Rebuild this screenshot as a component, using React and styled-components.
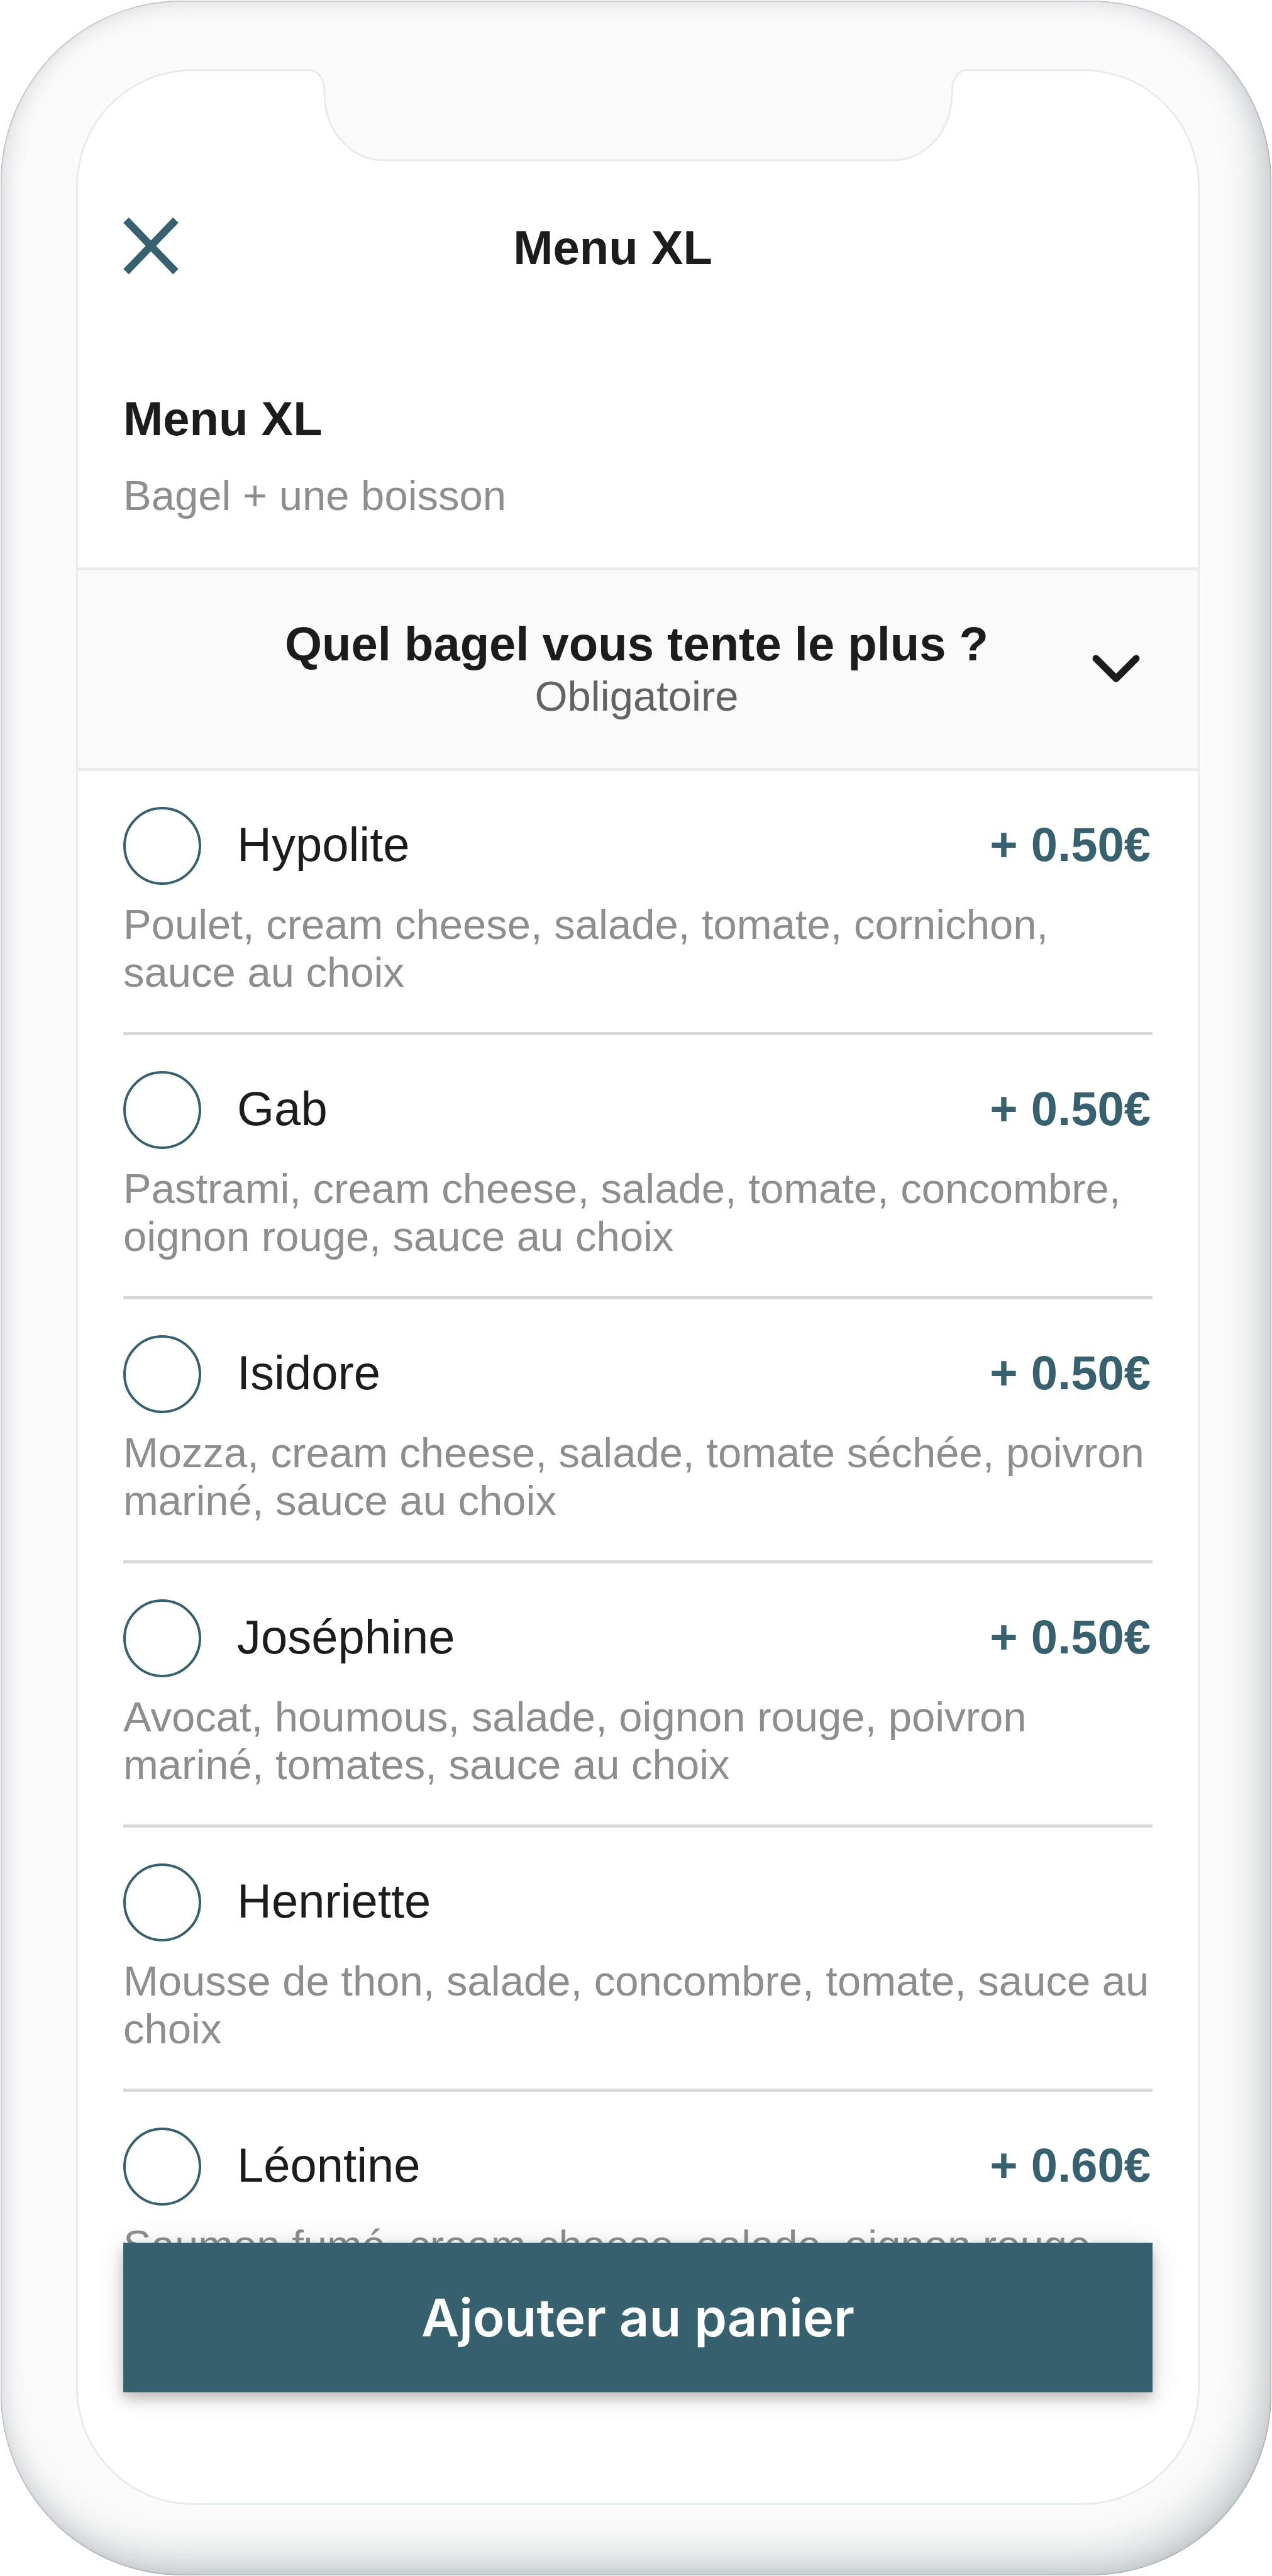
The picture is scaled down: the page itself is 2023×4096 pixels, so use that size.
import React, { useState } from "react";
import styled, { createGlobalStyle } from "styled-components";

const color = {
  teal: "#37616e",
  ink: "#1c1c1c",
  muted: "#8e8e8e",
  subtle: "#636363",
  rule: "#d8d8d8",
  edge: "#e6ebee",
  bandRule: "#ebebeb",
  band: "#fafafa",
};

const GlobalStyle = createGlobalStyle`
  *, *::before, *::after { box-sizing: border-box; }
  body {
    margin: 0;
    background: #fff;
    color: ${color.ink};
    font-family: "Liberation Sans", Arial, sans-serif;
  }
  h1, h2, p, ul { margin: 0; padding: 0; font-weight: inherit; }
  button { margin: 0; padding: 0; border: 0; background: none; color: inherit; font: inherit; cursor: pointer; }
`;

const Stage = styled.div`
  display: flex;
  height: 100vh;
  padding: 1px;
`;

const Phone = styled.div`
  flex: 1;
  display: flex;
  min-width: 0;
  padding: 109px 114px 112px 120px;
  border-radius: 288px;
  background: #fbfbfb;
  box-shadow:
    inset 0 0 2px 1px rgba(90, 100, 100, 0.4),
    inset 0 0 36px rgba(112, 118, 130, 0.22),
    inset -20px -32px 72px -8px rgba(124, 140, 142, 0.4);
`;

const Screen = styled.main`
  flex: 1;
  display: flex;
  flex-direction: column;
  min-width: 0;
  position: relative;
  border: 3px solid ${color.edge};
  border-radius: 186px;
  background: #fff;
`;

const Notch = styled.svg`
  position: absolute;
  top: -3px;
  left: 50%;
  margin-left: -530px;
  display: block;
`;

const Header = styled.header`
  display: grid;
  grid-template-columns: 88px 1fr 168px;
  align-items: end;
  padding: 232px 72px 182px;
`;

const CloseButton = styled.button`
  display: flex;
  padding-bottom: 2px;
`;

const Heading = styled.h1`
  font-size: 76px;
  font-weight: 700;
  line-height: 90px;
  text-align: ${(p) => p.$align || "left"};
`;

const Intro = styled.section`
  display: flex;
  flex-direction: column;
  gap: 39px;
  padding: 0 72px 76px;
`;

const Description = styled.p`
  color: ${(p) => p.$tone || color.muted};
  font-size: 67px;
  line-height: 76px;
`;

const QuestionBand = styled.section`
  display: grid;
  grid-template-columns: 112px 1fr 112px;
  align-items: center;
  padding: 72px 74px 76px 70px;
  border: solid ${color.bandRule};
  border-width: 5px 0;
  background: ${color.band};
  text-align: center;
`;

const QuestionText = styled.div`
  grid-column: 2;
`;

const ToggleButton = styled.button`
  display: flex;
  justify-content: center;
`;

const Options = styled.ul`
  flex: 1;
  min-height: 0;
  overflow: hidden;
  padding: 0 72px;
  list-style: none;
`;

const Option = styled.li`
  display: flex;
  flex-direction: column;
  gap: 25px;
  padding: 57px 0;
  border-bottom: 5px solid ${color.rule};
`;

const OptionHead = styled.div`
  display: flex;
  align-items: center;
`;

const Radio = styled.input`
  appearance: none;
  width: 124px;
  height: 124px;
  margin: 0 57px 0 0;
  border: 4px solid ${color.teal};
  border-radius: 50%;
  cursor: pointer;

  &:checked {
    background: radial-gradient(${color.teal} 0 50%, transparent 51%);
  }
`;

const Name = styled.label`
  flex: 1;
  padding-bottom: 5px;
  font-size: 76px;
  line-height: 90px;
  cursor: pointer;
`;

const Price = styled.span`
  padding: 0 3px 5px 0;
  color: ${color.teal};
  font-size: 76px;
  font-weight: 700;
  line-height: 90px;
`;

const Footer = styled.footer`
  display: flex;
  position: relative;
  padding: 0 72px 176px;
`;

const AddButton = styled.button`
  flex: 1;
  height: 238px;
  background: ${color.teal};
  box-shadow: 0 10px 20px rgba(0, 0, 0, 0.22), 0 4px 48px rgba(0, 0, 0, 0.1);
  color: #fff;
  font-family: Inter, sans-serif;
  font-size: 83px;
  font-weight: 600;
  line-height: 100px;
`;

const bagels = [
  { id: "hypolite", name: "Hypolite", price: "+ 0.50€", text: "Poulet, cream cheese, salade, tomate, cornichon, sauce au choix" },
  { id: "gab", name: "Gab", price: "+ 0.50€", text: "Pastrami, cream cheese, salade, tomate, concombre, oignon rouge, sauce au choix" },
  { id: "isidore", name: "Isidore", price: "+ 0.50€", text: "Mozza, cream cheese, salade, tomate séchée, poivron mariné, sauce au choix" },
  { id: "josephine", name: "Joséphine", price: "+ 0.50€", text: "Avocat, houmous, salade, oignon rouge, poivron mariné, tomates, sauce au choix" },
  { id: "henriette", name: "Henriette", text: "Mousse de thon, salade, concombre, tomate, sauce au choix" },
  { id: "leontine", name: "Léontine", price: "+ 0.60€", text: "Saumon fumé, cream cheese, salade, oignon rouge" },
];

export default function App() {
  const [choice, setChoice] = useState(null);

  return (
    <>
      <GlobalStyle />
      <Stage>
        <Phone>
          <Screen>
            <Notch width="1060" height="148" viewBox="0 0 1060 148" aria-hidden="true">
              <path
                d="M0 1.5 H6 C22 1.5 31 16 31 38 C31 102 76 145 126 145 H934 C984 145 1029 102 1029 38 C1029 16 1038 1.5 1054 1.5 H1060 V0 H0 Z"
                fill="#fafafa"
              />
              <path
                d="M0 1.5 H6 C22 1.5 31 16 31 38 C31 102 76 145 126 145 H934 C984 145 1029 102 1029 38 C1029 16 1038 1.5 1054 1.5 H1060"
                fill="none"
                stroke={color.edge}
                strokeWidth="3"
              />
            </Notch>

            <Header>
              <CloseButton type="button" aria-label="Fermer">
                <svg width="88" height="92" viewBox="0 0 88 92" fill="none" stroke={color.teal} strokeWidth="12">
                  <path d="M4.500 5 L83.500 87 M83.500 5 L4.500 87" />
                </svg>
              </CloseButton>
              <Heading $align="center">Menu XL</Heading>
            </Header>

            <Intro>
              <Heading as="h2">Menu XL</Heading>
              <Description>Bagel + une boisson</Description>
            </Intro>

            <QuestionBand>
              <QuestionText>
                <Heading as="h2" $align="center">Quel bagel vous tente le plus ?</Heading>
                <Description $tone={color.subtle}>Obligatoire</Description>
              </QuestionText>
              <ToggleButton type="button" aria-label="Replier">
                <svg
                  width="80"
                  height="48"
                  viewBox="0 0 80 48"
                  fill="none"
                  stroke={color.ink}
                  strokeWidth="11"
                  strokeLinecap="round"
                  strokeLinejoin="round"
                >
                  <path d="M8 9 L40 41 L72 9" />
                </svg>
              </ToggleButton>
            </QuestionBand>

            <Options>
              {bagels.map((b) => (
                <Option key={b.id}>
                  <OptionHead>
                    <Radio
                      type="radio"
                      name="bagel"
                      id={b.id}
                      checked={choice === b.id}
                      onChange={() => setChoice(b.id)}
                    />
                    <Name htmlFor={b.id}>{b.name}</Name>
                    {b.price && <Price>{b.price}</Price>}
                  </OptionHead>
                  <Description>{b.text}</Description>
                </Option>
              ))}
            </Options>

            <Footer>
              <AddButton type="button">Ajouter au panier</AddButton>
            </Footer>
          </Screen>
        </Phone>
      </Stage>
    </>
  );
}
